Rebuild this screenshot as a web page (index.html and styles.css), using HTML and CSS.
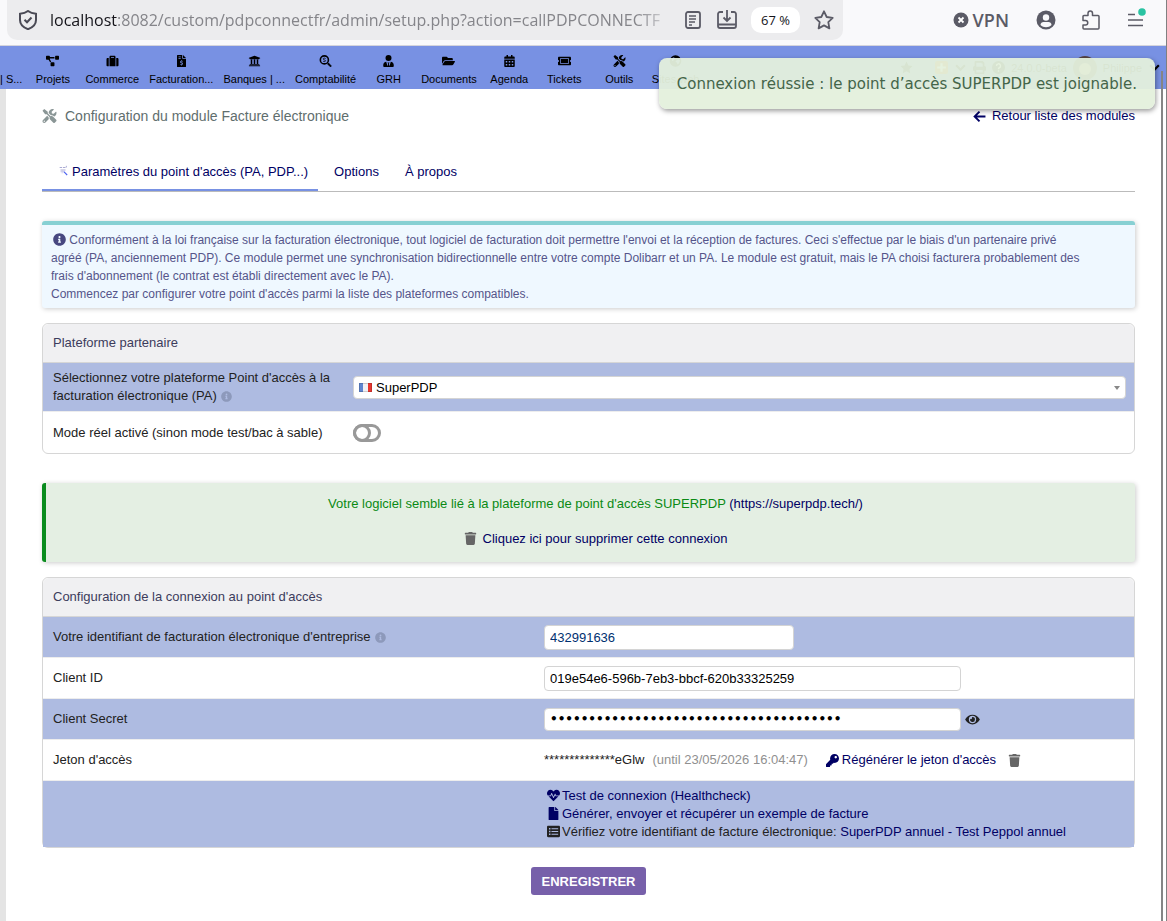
FILE: index.html
```html
<!DOCTYPE html>
<html lang="fr">
<head>
    <meta charset="UTF-8">
    <meta name="viewport" content="width=device-width, initial-scale=1.0">
    <title>Configuration du module Facture électronique</title>
    <link rel="stylesheet" href="styles.css">
</head>
<body>
    <svg class="sprite" aria-hidden="true">
        <symbol id="i-tools" viewBox="0 0 512 512"><path d="M501.1 395.7L384 278.6c-23.1-23.1-57.6-27.6-85.4-13.9L192 158.1V96L64 0 0 64l96 128h62.1l106.6 106.6c-13.6 27.8-9.2 62.3 13.9 85.4l117.1 117.1c14.6 14.6 38.2 14.6 52.7 0l52.7-52.7c14.5-14.6 14.5-38.2 0-52.7zM331.7 225c28.3 0 54.9 11 74.9 31l19.4 19.4c15.8-6.9 30.8-16.5 43.8-29.5 37.1-37.1 49.7-89.3 37.9-136.7-2.2-9-13.5-12.1-20.1-5.5l-74.4 74.4-67.9-11.3L334 98.9l74.4-74.4c6.6-6.6 3.4-17.9-5.7-20.2-47.4-11.7-99.6.9-136.6 37.9-28.5 28.5-41.9 66.1-41.2 103.6l82.1 82.1c8.1-1.9 16.5-2.9 24.7-2.9zm-103.9 82l-56.7-56.7L18.7 402.8c-25 25-25 65.5 0 90.5s65.5 25 90.5 0l123.6-123.6c-7.6-19.9-9.9-41.6-5-62.7zM64 472c-13.2 0-24-10.8-24-24 0-13.3 10.7-24 24-24s24 10.7 24 24c0 13.2-10.7 24-24 24z"/></symbol>
        <symbol id="i-project" viewBox="0 0 640 512"><path d="M384 320H256c-17.67 0-32 14.33-32 32v128c0 17.67 14.33 32 32 32h128c17.67 0 32-14.33 32-32V352c0-17.67-14.33-32-32-32zM192 32c0-17.67-14.33-32-32-32H32C14.33 0 0 14.33 0 32v128c0 17.67 14.33 32 32 32h95.72l73.16 128.04C211.98 300.98 232.4 288 256 288h.28L192 175.51V128h224V64H192V32zM608 0H480c-17.67 0-32 14.33-32 32v128c0 17.67 14.33 32 32 32h128c17.67 0 32-14.33 32-32V32c0-17.67-14.33-32-32-32z"/></symbol>
        <symbol id="i-suitcase" viewBox="0 0 512 512"><path d="M128 480h256V80c0-26.5-21.5-48-48-48H176c-26.5 0-48 21.5-48 48v400zm64-384h128v32H192V96zm320 80v256c0 26.5-21.5 48-48 48h-48V128h48c26.5 0 48 21.5 48 48zM96 480H48c-26.5 0-48-21.5-48-48V176c0-26.5 21.5-48 48-48h48v352z"/></symbol>
        <symbol id="i-invoice" viewBox="0 0 384 512"><path fill-rule="evenodd" d="M24 0h200v136c0 13 11 24 24 24h136v328c0 13-11 24-24 24H24c-13 0-24-11-24-24V24C0 11 11 0 24 0zM256 0l128 128H256zM64 64v32h96V64zM64 128v32h96v-32zM176 224v26c-60 8-62 82-6 98l44 13c16 6 12 31-6 31h-28c-10 0-18-4-26-10l-22 22c12 10 28 16 44 18v26h32v-26c60-6 66-84 8-100l-46-14c-14-6-10-28 6-28h28c8 0 14 2 20 6l24-22c-12-8-26-14-40-14v-26z"/></symbol>
        <symbol id="i-bank" viewBox="0 0 512 512"><path d="M496 128v16a8 8 0 0 1-8 8h-24v12c0 6.627-5.373 12-12 12H60c-6.627 0-12-5.373-12-12v-12H24a8 8 0 0 1-8-8v-16a8 8 0 0 1 4.941-7.392l232-88a7.996 7.996 0 0 1 6.118 0l232 88A8 8 0 0 1 496 128zm-24 304H40c-13.255 0-24 10.745-24 24v16a8 8 0 0 0 8 8h464a8 8 0 0 0 8-8v-16c0-13.255-10.745-24-24-24zM96 192v192H60c-6.627 0-12 5.373-12 12v20h416v-20c0-6.627-5.373-12-12-12h-36V192h-64v192h-64V192h-64v192h-64V192H96z"/></symbol>
        <symbol id="i-accounting" viewBox="0 0 512 512"><circle cx="208" cy="208" r="172" fill="none" stroke="currentColor" stroke-width="68"/><path d="M335 380l45-45 122 122c12 12 12 12 0 24l-21 21c-12 12-12 12-24 0z" stroke="currentColor" stroke-width="20"/><path d="M260 150c-30-26-100-24-102 18 0 50 100 30 100 80-2 42-78 42-106 14" fill="none" stroke="currentColor" stroke-width="34"/></symbol>
        <symbol id="i-user-tie" viewBox="0 0 448 512"><path d="M224 256a128 128 0 1 0 0-256 128 128 0 0 0 0 256zm96 33l-56 191-24-102 32-58H176l32 58-24 102-56-191C58 292 0 352 0 422v42c0 27 21 48 48 48h352c27 0 48-21 48-48v-42c0-70-58-130-128-133z"/></symbol>
        <symbol id="i-folder" viewBox="0 0 576 512"><path d="M572.694 292.093L500.27 416.248A63.997 63.997 0 0 1 444.989 448H45.025c-18.523 0-30.064-20.093-20.731-36.093l72.424-124.155A64 64 0 0 1 152 256h399.964c18.523 0 30.064 20.093 20.73 36.093zM152 224h328v-48c0-26.51-21.49-48-48-48H272l-64-64H48C21.49 64 0 85.49 0 112v278.046l69.077-118.418C86.214 242.25 117.989 224 152 224z"/></symbol>
        <symbol id="i-calendar" viewBox="0 0 448 512"><path fill-rule="evenodd" d="M48 64h48V12c0-7 5-12 12-12h40c7 0 12 5 12 12v52h128V12c0-7 5-12 12-12h40c7 0 12 5 12 12v52h48c27 0 48 21 48 48v48H0v-48c0-27 21-48 48-48zM0 192h448v272c0 27-21 48-48 48H48c-27 0-48-21-48-48zM64 256v64h64v-64zM192 256v64h64v-64zM320 256v64h64v-64zM64 384v64h64v-64zM192 384v64h64v-64zM320 384v64h64v-64z"/></symbol>
        <symbol id="i-ticket" viewBox="0 0 576 512"><path fill-rule="evenodd" d="M48 64h480c27 0 48 21 48 48v96a48 48 0 0 0 0 96v96c0 27-21 48-48 48H48c-27 0-48-21-48-48v-96a48 48 0 0 0 0-96v-96c0-27 21-48 48-48zM96 152v208c0 13 11 24 24 24h336c13 0 24-11 24-24V152c0-13-11-24-24-24H120c-13 0-24 11-24 24zM128 160h320v192H128z"/></symbol>
        <symbol id="i-globe" viewBox="0 0 512 512"><path fill-rule="evenodd" d="M256 8a248 248 0 1 0 0 496 248 248 0 0 0 0-496zM120 130l70-30 40 50-50 60-30 60-50-40zM300 220l90-40 60 60-40 100-60 60-40-80-60-30z"/></symbol>
        <symbol id="i-star" viewBox="0 0 24 24"><path d="M12 1l3.4 7.2 7.6 1-5.6 5.4 1.4 7.9L12 18.7 5.2 22.5l1.4-7.9L1 9.2l7.6-1z"/></symbol>
        <symbol id="i-print" viewBox="0 0 512 512"><path fill-rule="evenodd" d="M64 192V32c0-18 14-32 32-32h288l64 64v128c35 0 64 29 64 64v112c0 9-7 16-16 16h-48v96c0 18-14 32-32 32H96c-18 0-32-14-32-32v-96H16c-9 0-16-7-16-16V256c0-35 29-64 64-64zM128 64v160h256V96h-48V64zM128 352v96h256v-96z"/></symbol>
        <symbol id="i-help" viewBox="0 0 16 16"><circle cx="8" cy="8" r="8"/><path d="M5.500 6a2.500 2.500 0 1 1 3.500 2.300c-.7.3-1 .8-1 1.700M8 11.500v1.800" fill="none" stroke="#fff" stroke-width="1.800"/></symbol>
        <symbol id="i-info" viewBox="0 0 512 512"><path d="M256 8C119.043 8 8 119.083 8 256c0 136.997 111.043 248 248 248s248-111.003 248-248C504 119.083 392.957 8 256 8zm0 110c23.196 0 42 18.804 42 42s-18.804 42-42 42-42-18.804-42-42 18.804-42 42-42zm56 254c0 6.627-5.373 12-12 12h-88c-6.627 0-12-5.373-12-12v-24c0-6.627 5.373-12 12-12h12v-64h-12c-6.627 0-12-5.373-12-12v-24c0-6.627 5.373-12 12-12h64c6.627 0 12 5.373 12 12v100h12c6.627 0 12 5.373 12 12v24z"/></symbol>
        <symbol id="i-trash" viewBox="0 0 448 512"><path d="M432 32H312l-9.4-18.7A24 24 0 0 0 281.1 0H166.8a23.72 23.72 0 0 0-21.4 13.3L136 32H16A16 16 0 0 0 0 48v32a16 16 0 0 0 16 16h416a16 16 0 0 0 16-16V48a16 16 0 0 0-16-16zM53.2 467a48 48 0 0 0 47.9 45h245.8a48 48 0 0 0 47.9-45L416 128H32z"/></symbol>
        <symbol id="i-key" viewBox="0 0 512 512"><path d="M512 176.001C512 273.203 433.202 352 336 352c-11.22 0-22.19-1.062-32.827-3.069l-24.012 27.014A23.999 23.999 0 0 1 261.223 384H224v40c0 13.255-10.745 24-24 24h-40v40c0 13.255-10.745 24-24 24H24c-13.255 0-24-10.745-24-24v-78.059c0-6.365 2.529-12.47 7.029-16.971l161.802-161.802C163.108 213.814 160 195.271 160 176 160 78.798 238.797.001 335.999 0 433.488-.001 512 78.511 512 176.001zM336 128c0 26.51 21.49 48 48 48s48-21.49 48-48-21.49-48-48-48-48 21.49-48 48z"/></symbol>
        <symbol id="i-eye" viewBox="0 0 576 512"><path d="M572.52 241.4C518.29 135.59 410.93 64 288 64S57.68 135.64 3.48 241.41a32.35 32.35 0 0 0 0 29.19C57.71 376.41 165.07 448 288 448s230.32-71.64 284.52-177.41a32.35 32.35 0 0 0 0-29.19zM288 400a144 144 0 1 1 144-144 143.93 143.93 0 0 1-144 144zm0-240a95.31 95.31 0 0 0-25.31 3.79 47.85 47.85 0 0 1-66.9 66.9A95.78 95.78 0 1 0 288 160z"/></symbol>
        <symbol id="i-heart" viewBox="0 0 512 512"><path d="M320.2 243.8l-49.7 99.4c-6 12.1-23.4 11.7-28.9-.6l-56.9-126.3-30 71.7H60.6l182.5 186.5c7.1 7.3 18.6 7.3 25.7 0L451.4 288H342.3l-22.1-44.2zM473.7 73.9l-2.4-2.5c-51.5-52.6-135.8-52.6-187.4 0L256 100l-27.9-28.5c-51.5-52.7-135.9-52.7-187.4 0l-2.4 2.4C-10.4 123.7-12.5 203 31 256h102.4l35.9-86.2c5.4-12.9 23.6-13.2 29.4-.4l58.2 129.3 49-97.9c5.9-11.8 22.7-11.8 28.6 0l27.6 55.2H481c43.5-53 41.4-132.3-7.3-182.1z"/></symbol>
        <symbol id="i-file" viewBox="0 0 384 512"><path d="M224 136V0H24C10.7 0 0 10.7 0 24v464c0 13.3 10.7 24 24 24h336c13.3 0 24-10.7 24-24V160H248c-13.2 0-24-10.8-24-24zm160-14.1v6.1H256V0h6.1c6.4 0 12.5 2.5 17 7l97.9 98c4.5 4.5 7 10.6 7 16.9z"/></symbol>
        <symbol id="i-list" viewBox="0 0 512 512"><path fill-rule="evenodd" d="M48 32h416c27 0 48 21 48 48v352c0 27-21 48-48 48H48c-27 0-48-21-48-48V80c0-27 21-48 48-48zM80 120v56h56v-56zM176 128v40h264v-40zM80 228v56h56v-56zM176 236v40h264v-40zM80 336v56h56v-56zM176 344v40h264v-40z"/></symbol>
    </svg>

    <header class="browser">
        <div class="urlbar">
            <svg class="shield" viewBox="0 0 20 20"><path d="M10 1C8 2.500 5 3.500 2 3.800V10c0 4.500 3.500 7.500 8 9.200 4.500-1.700 8-4.700 8-9.200V3.800C15 3.500 12 2.500 10 1z"/><path d="M6.500 9.800l2.500 2.500 4.500-4.800"/></svg>
            <span class="url"><b>localhost</b>:8082/custom/pdpconnectfr/admin/setup.php?action=callPDPCONNECTF</span>
            <button class="tool" aria-label="Mode lecture"><svg width="18" height="20" viewBox="0 0 18 20"><rect x="2" y="2" width="14" height="16" rx="2"/><path d="M5 6h7M5 9h7M5 12h6M5 15h3" stroke-width="1.300"/></svg></button>
            <button class="tool install" aria-label="Installer"><svg width="20" height="20" viewBox="0 0 20 20"><path d="M6 2H3a2 2 0 0 0-2 2v12a2 2 0 0 0 2 2h14a2 2 0 0 0 2-2V4a2 2 0 0 0-2-2h-3M1 14.500h18M10 0v10M6.500 7.500L10 11l3.500-3.500"/></svg></button>
            <button class="zoom">67 %</button>
            <button class="tool" aria-label="Favori"><svg width="20" height="20" viewBox="0 0 20 20"><path d="M10 1.300l2.700 5.700 6 .8-4.400 4.300 1.100 6.300-5.400-3-5.400 3 1.100-6.300L1.300 7.800l6-.8z" stroke-linejoin="round"/></svg></button>
        </div>
        <div class="browser-tools">
            <button class="vpn"><svg width="16" height="16" viewBox="0 0 16 16"><circle cx="8" cy="8" r="7.500" fill="#5b5b66"/><path d="M5.500 5.500l5 5M10.500 5.500l-5 5" stroke="#fff" stroke-width="1.800"/></svg>VPN</button>
            <button class="tool" aria-label="Compte"><svg width="20" height="20" viewBox="0 0 20 20"><circle cx="10" cy="10" r="9.500" fill="#5b5b66" stroke="none"/><circle cx="10" cy="7.500" r="3.200" fill="#f9f9fb" stroke="none"/><path d="M4.500 15c0-2 1.500-3 3-3h5c1.500 0 3 1 3 3-3 3-8 3-11 0z" fill="#f9f9fb" stroke="none"/></svg></button>
            <button class="tool" aria-label="Extensions"><svg width="20" height="20" viewBox="0 0 20 20"><path d="M3 5.500h4V3.200a2.200 2.200 0 0 1 4.500 0v2.300H17a1 1 0 0 1 1 1V18a1 1 0 0 1-1 1H3a1 1 0 0 1-1-1v-3h2.500a2.200 2.200 0 0 0 0-4.500H2v-4a1 1 0 0 1 1-1z" stroke-width="1.500" stroke-linejoin="round"/></svg></button>
            <button class="tool" aria-label="Menu"><svg width="20" height="24" viewBox="0 0 20 24"><path d="M2 6.500h7M2 12h15M2 17.500h15" stroke-width="1.500"/><circle cx="16" cy="4" r="3.800" fill="#2ac3a2" stroke="none"/></svg></button>
        </div>
    </header>

    <div class="viewport">
        <nav class="topmenu">
            <a class="entry first" href="#"><span>| S...</span></a>
            <a class="entry" href="#"><svg class="icon"><use href="#i-project"/></svg><span>Projets</span></a>
            <a class="entry" href="#"><svg class="icon"><use href="#i-suitcase"/></svg><span>Commerce</span></a>
            <a class="entry" href="#"><svg class="icon"><use href="#i-invoice"/></svg><span>Facturation...</span></a>
            <a class="entry" href="#"><svg class="icon"><use href="#i-bank"/></svg><span>Banques | ...</span></a>
            <a class="entry" href="#"><svg class="icon"><use href="#i-accounting"/></svg><span>Comptabilité</span></a>
            <a class="entry" href="#"><svg class="icon"><use href="#i-user-tie"/></svg><span>GRH</span></a>
            <a class="entry" href="#"><svg class="icon"><use href="#i-folder"/></svg><span>Documents</span></a>
            <a class="entry" href="#"><svg class="icon"><use href="#i-calendar"/></svg><span>Agenda</span></a>
            <a class="entry" href="#"><svg class="icon"><use href="#i-ticket"/></svg><span>Tickets</span></a>
            <a class="entry" href="#"><svg class="icon"><use href="#i-tools"/></svg><span>Outils</span></a>
            <a class="entry" href="#"><svg class="icon"><use href="#i-globe"/></svg><span>Sites web</span></a>
            <div class="login">
                <svg class="icon bookmark"><use href="#i-star"/></svg>
                <svg class="icon" viewBox="0 0 12 12"><rect width="12" height="12" rx="2" fill="#c60"/><path d="M6 2v8M2 6h8" stroke="#fff" stroke-width="2"/></svg>
                <svg class="icon" viewBox="0 0 12 12"><path d="M2 4l4 4 4-4" fill="none" stroke="#000" stroke-width="2"/></svg>
                <svg class="icon"><use href="#i-print"/></svg>
                <svg class="icon"><use href="#i-help"/></svg>
                <span>24.0.0-beta</span>
                <svg class="avatar" viewBox="0 0 24 24"><circle cx="12" cy="12" r="12" fill="#544"/><circle cx="12" cy="13" r="6" fill="#ca8"/></svg>
                <span>Philippe</span>
                <svg class="icon" viewBox="0 0 12 12"><path d="M2 4l4 4 4-4" fill="none" stroke="#000" stroke-width="2"/></svg>
            </div>
        </nav>

        <main class="page">
            <div class="titlebar">
                <h1><svg class="icon"><use href="#i-tools"/></svg>Configuration du module Facture électronique</h1>
                <a href="#"><svg class="icon" viewBox="0 0 12 12"><path d="M11.500 6H1.500M6 1.500L1.500 6 6 10.500" fill="none" stroke="currentColor" stroke-width="1.800"/></svg>Retour liste des modules</a>
            </div>

            <div class="tabs">
                <a class="tab active" href="#"><svg class="icon" viewBox="0 0 12 12"><path d="M2 3h3M6 3h3M10 1v2M3 6h6" stroke="#9a9acb" fill="none"/><path d="M3 8h4M5 6v4" stroke="#c5c5e5"/><path d="M7 8l4 4" stroke="#4a60f0" stroke-width="1.300"/></svg>Paramètres du point d'accès (PA, PDP...)</a>
                <a class="tab" href="#">Options</a>
                <a class="tab" href="#">À propos</a>
            </div>

            <div class="info">
                <svg class="icon"><use href="#i-info"/></svg>
                Conformément à la loi française sur la facturation électronique, tout logiciel de facturation doit permettre l'envoi et la réception de factures. Ceci s'effectue par le biais d'un partenaire privé<br>
                agréé (PA, anciennement PDP). Ce module permet une synchronisation bidirectionnelle entre votre compte Dolibarr et un PA. Le module est gratuit, mais le PA choisi facturera probablement des<br>
                frais d'abonnement (le contrat est établi directement avec le PA).<br>
                Commencez par configurer votre point d'accès parmi la liste des plateformes compatibles.
            </div>

            <table class="box platform">
                <colgroup><col class="name-col"><col></colgroup>
                <tr><th colspan="2">Plateforme partenaire</th></tr>
                <tr class="tall">
                    <td class="name"><label for="platform">Sélectionnez votre plateforme Point d'accès à la facturation électronique (PA)</label> <svg class="icon help"><use href="#i-info"/></svg></td>
                    <td>
                        <div class="select">
                            <svg class="flag" viewBox="0 0 13 9"><rect width="13" height="9" fill="#f1f1f4"/><rect width="4" height="9" fill="#5f86d0"/><rect x="9" width="4" height="9" fill="#e8372f"/><rect x=".5" y=".5" width="12" height="8" fill="none" stroke="#000" stroke-opacity=".15"/></svg>
                            <select id="platform"><option>SuperPDP</option></select>
                        </div>
                    </td>
                </tr>
                <tr>
                    <td class="name"><label for="live">Mode réel activé (sinon mode test/bac à sable)</label></td>
                    <td><input type="checkbox" id="live" class="switch"></td>
                </tr>
            </table>

            <div class="linked">
                <p>Votre logiciel semble lié à la plateforme de point d'accès SUPERPDP <a href="#">(https://superpdp.tech/)</a></p>
                <p><a href="#"><svg class="icon trash"><use href="#i-trash"/></svg>Cliquez ici pour supprimer cette connexion</a></p>
            </div>

            <form onsubmit="return false">
                <table class="box connection">
                    <colgroup><col class="name-col"><col></colgroup>
                    <tr><th colspan="2">Configuration de la connexion au point d'accès</th></tr>
                    <tr>
                        <td class="name"><label for="ident">Votre identifiant de facturation électronique d'entreprise</label> <svg class="icon help"><use href="#i-info"/></svg></td>
                        <td><input type="text" id="ident" class="short" value="432991636"></td>
                    </tr>
                    <tr>
                        <td class="name"><label for="client">Client ID</label></td>
                        <td><input type="text" id="client" value="019e54e6-596b-7eb3-bbcf-620b33325259"></td>
                    </tr>
                    <tr>
                        <td class="name"><label for="secret">Client Secret</label></td>
                        <td><div class="line"><input type="password" id="secret" value="abcdefghijklmnopqrstuvwxyz012345678901"><svg class="icon eye"><use href="#i-eye"/></svg></div></td>
                    </tr>
                    <tr>
                        <td class="name">Jeton d'accès</td>
                        <td>
                            <div class="line">
                                <span>**************eGlw</span>
                                <span class="until">(until 23/05/2026 16:04:47)</span>
                                <a class="renew" href="#"><svg class="icon"><use href="#i-key"/></svg>Régénérer le jeton d'accès</a>
                                <a class="drop" href="#" aria-label="Supprimer le jeton"><svg class="icon trash"><use href="#i-trash"/></svg></a>
                            </div>
                        </td>
                    </tr>
                    <tr>
                        <td class="name"></td>
                        <td class="actions">
                            <div><a href="#"><svg class="icon"><use href="#i-heart"/></svg>Test de connexion (Healthcheck)</a></div>
                            <div><a href="#"><svg class="icon"><use href="#i-file"/></svg>Générer, envoyer et récupérer un exemple de facture</a></div>
                            <div><svg class="icon"><use href="#i-list"/></svg>Vérifiez votre identifiant de facture électronique: <a href="#">SuperPDP annuel</a> <a href="#">- Test Peppol annuel</a></div>
                        </td>
                    </tr>
                </table>
                <div class="buttons"><button class="save" type="submit">Enregistrer</button></div>
            </form>
        </main>

        <div class="toast" role="status">Connexion réussie : le point d’accès SUPERPDP est joignable.</div>
        <div class="scrollbar"></div>
    </div>
</body>
</html>
```
FILE: styles.css
```css
*,
*::before {
    box-sizing: border-box;
}
body {
    margin: 0;
    min-height: 100vh;
    display: flex;
    flex-direction: column;
    background-color: #fff;
    border-right: 1px solid #808080;
    font-family: "Liberation Sans", Arial, sans-serif;
    font-size: 13px;
    line-height: 18px;
    color: #222;
}
a {
    color: #000064;
    text-decoration: none;
}
button {
    border: none;
    background: none;
    padding: 0;
    cursor: pointer;
}
.sprite {
    display: none;
}
.icon {
    width: 13px;
    height: 13px;
    fill: currentColor;
}

/* Browser bar */
.browser {
    display: flex;
    justify-content: space-between;
    height: 46px;
    background-color: #f9f9fb;
    border-bottom: 1px solid #d4d4dc;
    padding-left: 7px;
}
.urlbar {
    display: flex;
    align-items: center;
    flex: 0 1 836px;
    min-width: 0;
    height: 40px;
    padding: 0 9px 0 11px;
    background-color: #ececee;
    border-radius: 0 0 10px 10px;
}
.shield {
    width: 20px;
    height: 20px;
    flex-shrink: 0;
    margin-right: 12px;
    fill: none;
    stroke: #4a4a55;
    stroke-width: 2;
}
.url {
    flex: 1;
    overflow: hidden;
    white-space: nowrap;
    font-family: "Open Sans", "Noto Sans", sans-serif;
    font-size: 16px;
    line-height: 24px;
    color: #85858a;
    -webkit-mask-image: linear-gradient(to left, transparent, #000 40px);
    mask-image: linear-gradient(to left, transparent, #000 40px);
}
.url b {
    font-weight: normal;
    color: #15141a;
}
.tool {
    display: flex;
    margin-left: 8px;
}
.tool.install {
    margin-left: 15px;
}
.tool svg {
    fill: none;
    stroke: #5b5b66;
    stroke-width: 1.8;
}
.zoom {
    height: 26px;
    padding: 0 10px;
    margin: 0 6px 0 14px;
    border-radius: 10px;
    background-color: #fff;
    font-family: "Open Sans", "Noto Sans", sans-serif;
    font-size: 13px;
    color: #15141a;
}
.browser-tools {
    display: flex;
    align-items: center;
    gap: 17px;
    height: 40px;
    padding-right: 20px;
}
.vpn {
    display: flex;
    align-items: center;
    gap: 4px;
    margin-right: 2px;
    font-family: "Open Sans", "Noto Sans", sans-serif;
    font-size: 18px;
    font-weight: 600;
    color: #5b5b66;
}

/* Application */
.viewport {
    position: relative;
    flex: 1;
}
.topmenu {
    display: flex;
    height: 43px;
    background-color: #7891e3;
    overflow: hidden;
    white-space: nowrap;
}
.entry {
    display: flex;
    flex-direction: column;
    align-items: center;
    flex-shrink: 0;
    min-width: 55px;
    padding: 9px 5px 0;
    font-size: 11px;
    line-height: 14px;
    color: #000;
}
.entry .icon {
    height: 12px;
    margin-bottom: 5px;
}
.entry.first {
    min-width: 25px;
    padding: 26px 3px 0 0;
}
.login {
    display: flex;
    align-items: center;
    gap: 6px;
    margin-left: auto;
    padding-right: 5px;
    font-size: 11px;
    color: #000;
}
.bookmark {
    margin-right: 16px;
}
.avatar {
    width: 24px;
    height: 24px;
}
.page {
    padding: 17px 31px 26px 36px;
    border-left: 6px solid #e4e4e4;
}
.titlebar {
    display: flex;
    justify-content: space-between;
    align-items: center;
    height: 20px;
}
.titlebar h1 {
    display: flex;
    align-items: center;
    gap: 8px;
    margin: 0;
    font-size: 14px;
    font-weight: normal;
    color: #5f6e6e;
}
.titlebar h1 .icon {
    width: 15px;
    height: 14px;
    color: #8a9696;
}
.titlebar a {
    display: flex;
    align-items: center;
    gap: 6px;
}
.tabs {
    display: flex;
    align-items: flex-end;
    margin-top: 26px;
    border-bottom: 1px solid #bbb;
}
.tab {
    height: 39px;
    padding: 11px 10px 0 16px;
    border-bottom: 2px solid transparent;
}
.tab.active {
    border-bottom-color: #7891e3;
}
.tab .icon {
    width: 10px;
    height: 12px;
    margin-right: 4px;
}
.info {
    margin-top: 29px;
    padding: 6px 9px 5px;
    background-color: #eff8ff;
    border-top: 4px solid #87d0d3;
    border-radius: 3px;
    box-shadow: 1px 1px 5px #ccc;
    font-size: 12px;
    color: #55558a;
}
.info .icon {
    margin-left: 2px;
    vertical-align: -2px;
    color: #484880;
}

/* Tables */
.box {
    width: 100%;
    border: 1px solid #d6d6d6;
    border-radius: 6px;
    border-spacing: 0;
    table-layout: fixed;
}
.platform {
    margin-top: 15px;
}
.platform .name-col {
    width: 308px;
}
.connection .name-col {
    width: 499px;
}
.box th {
    height: 39px;
    padding: 0 10px;
    background-color: #f0f0f2;
    border-bottom: 1px solid #d6d6d6;
    border-radius: 6px 6px 0 0;
    font-weight: normal;
    text-align: left;
    color: #3c3c5c;
}
.box td {
    padding: 0 8px 0 2px;
}
.box .name {
    padding: 0 10px;
}
.box tr:nth-child(even) td {
    height: 40px;
    background-color: #aebbe1;
}
.box tr:nth-child(odd) td {
    height: 42px;
    border-top: 1px solid #ededed;
    border-bottom: 1px solid #ededed;
}
.box tr:last-child td {
    border-bottom: none;
}
.platform tr.tall td {
    height: 48px;
}
.connection tr:last-child td {
    height: 66px;
}
.icon.help {
    width: 11px;
    height: 11px;
    margin-left: 1px;
    vertical-align: -2px;
    color: #8d99bb;
}
.trash {
    color: #666;
}
.select {
    position: relative;
}
.select::after {
    content: "";
    position: absolute;
    top: 10px;
    right: 6px;
    border: 3px solid transparent;
    border-top: 4px solid #888;
    border-bottom: none;
}
.flag {
    position: absolute;
    top: 7px;
    left: 6px;
    width: 13px;
    height: 9px;
}
select,
input[type="text"],
input[type="password"] {
    display: block;
    height: 25px;
    padding: 0 5px;
    border: 1px solid #d4d4d4;
    border-radius: 4px;
    background-color: #fff;
    font-family: inherit;
    font-size: 13px;
    color: #000;
}
select {
    appearance: none;
    width: 100%;
    height: 23px;
    padding-left: 22px;
}
input[type="text"],
input[type="password"] {
    width: 417px;
}
input[type="password"] {
    height: 23px;
    font-family: "DejaVu Sans", sans-serif;
    font-size: 12px;
    font-weight: bold;
}
input[type="text"].short {
    width: 250px;
    color: #003070;
}
.switch {
    appearance: none;
    display: block;
    width: 28px;
    height: 18px;
    margin: 0;
    border: 3px solid #999;
    border-radius: 9px;
}
.switch::before {
    content: "";
    display: block;
    width: 18px;
    height: 18px;
    margin: -3px;
    border: 3px solid #999;
    border-radius: 9px;
}
.line {
    display: flex;
    align-items: center;
}
.eye {
    width: 15px;
    margin-left: 4px;
}
.until {
    margin-left: 8px;
    color: #909090;
}
.renew {
    display: flex;
    align-items: center;
    gap: 3px;
    margin: 0 12px 0 18px;
}
.drop {
    display: flex;
}
.box .actions {
    padding-left: 4px;
}
.actions .icon {
    width: 15px;
    height: 13px;
    margin-right: 1px;
    vertical-align: -2px;
}
.linked {
    margin: 29px 0 15px;
    padding: 12px 0 14px 10px;
    border-left: 4px solid #0a8c1e;
    border-radius: 3px;
    background-color: #e4efe3;
    box-shadow: 1px 1px 5px #ccc;
    text-align: center;
    color: #0a8a14;
}
.linked p {
    margin: 0 0 17px;
}
.linked p:last-child {
    margin: 0;
}
.linked .icon {
    margin-right: 6px;
    vertical-align: -2px;
}
.buttons {
    padding-top: 19px;
    text-align: center;
}
.save {
    height: 28px;
    padding: 0 11px;
    border-radius: 3px;
    background-color: #7760aa;
    font-family: inherit;
    font-size: 13px;
    font-weight: bold;
    text-transform: uppercase;
    color: #fff;
}

/* Overlays */
.toast {
    position: absolute;
    top: 12px;
    right: 11px;
    padding: 15px 18px 14px;
    border-radius: 8px;
    background-color: rgba(228, 240, 220, 0.95);
    box-shadow: 1px 2px 5px rgba(0, 0, 0, 0.4);
    font-family: "DejaVu Sans", Verdana, sans-serif;
    font-size: 15px;
    line-height: 22px;
    color: #446549;
}
.scrollbar {
    position: absolute;
    top: 25px;
    right: 3px;
    bottom: 0;
    width: 2px;
    background-color: #858585;
}
```
